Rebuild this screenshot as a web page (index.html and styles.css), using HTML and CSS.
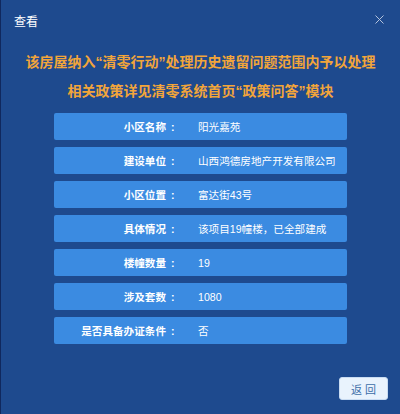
FILE: index.html
```html
<!DOCTYPE html>
<html lang="zh-CN">
<head>
<meta charset="utf-8">
<title>查看</title>
<link rel="stylesheet" href="styles.css">
</head>
<body>
<div class="dialog">
  <div class="head">
    <span class="title">查看</span>
    <svg class="close" width="9" height="9" viewBox="0 0 9 9"><path d="M0.5 0.5L8.5 8.5M8.5 0.5L0.5 8.5" stroke="#b4c3dc" stroke-width="1" fill="none"/></svg>
  </div>
  <div class="notice">
    <p>该房屋纳入“清零行动”处理历史遗留问题范围内予以处理</p>
    <p>相关政策详见清零系统首页“政策问答”模块</p>
  </div>
  <div class="rows">
    <div class="row"><span class="label">小区名称</span><span class="colon">:</span><span class="value">阳光嘉苑</span></div>
    <div class="row"><span class="label">建设单位</span><span class="colon">:</span><span class="value">山西鸿德房地产开发有限公司</span></div>
    <div class="row"><span class="label">小区位置</span><span class="colon">:</span><span class="value">富达街43号</span></div>
    <div class="row"><span class="label">具体情况</span><span class="colon">:</span><span class="value">该项目19幢楼，已全部建成</span></div>
    <div class="row"><span class="label">楼幢数量</span><span class="colon">:</span><span class="value">19</span></div>
    <div class="row"><span class="label">涉及套数</span><span class="colon">:</span><span class="value">1080</span></div>
    <div class="row"><span class="label">是否具备办证条件</span><span class="colon">:</span><span class="value">否</span></div>
  </div>
  <div class="foot">
    <button class="back">返回</button>
  </div>
</div>
</body>
</html>
```

FILE: styles.css
```css
html, body {
  margin: 0;
  padding: 0;
}
body {
  width: 400px;
  height: 414px;
  overflow: hidden;
  font-family: "Liberation Sans", "Noto Sans CJK SC", sans-serif;
}
.dialog {
  width: 400px;
  height: 414px;
  box-sizing: border-box;
  background: #1e4a8e;
  border-left: 1px solid #10285e;
}
.head {
  height: 42px;
  display: flex;
  align-items: center;
  justify-content: space-between;
  padding: 0 16px 0 13px;
}
.title {
  color: #ffffff;
  font-size: 12px;
  margin-top: -1px;
}
.close {
  display: block;
  margin-top: -4px;
}
.notice {
  padding-top: 6px;
  text-align: center;
  color: #f2a53a;
  font-size: 14px;
  font-weight: 700;
}
.notice p {
  margin: 0;
  line-height: 29px;
}
.rows {
  margin: 7px 53px 0 53px;
  display: flex;
  flex-direction: column;
  gap: 7px;
}
.row {
  height: 27px;
  background: #3b8be1;
  border-radius: 2px;
  display: grid;
  grid-template-columns: 112px 32px 1fr;
  align-items: center;
  color: #ffffff;
  font-size: 10.6px;
}
.label {
  text-align: right;
  font-weight: 700;
}
.colon {
  font-weight: 700;
  padding-left: 5px;
}
.value {
  white-space: nowrap;
}
.foot {
  display: flex;
  justify-content: flex-end;
  padding: 33px 12px 0 0;
}
.back {
  width: 49px;
  height: 23px;
  border: 1px solid #c9dcf2;
  border-radius: 3px;
  background: #e9f3fd;
  color: #3c6ea8;
  font-family: "Noto Sans CJK SC", sans-serif;
  font-size: 11px;
  letter-spacing: 3px;
  padding: 0 0 0 3px;
}
```
